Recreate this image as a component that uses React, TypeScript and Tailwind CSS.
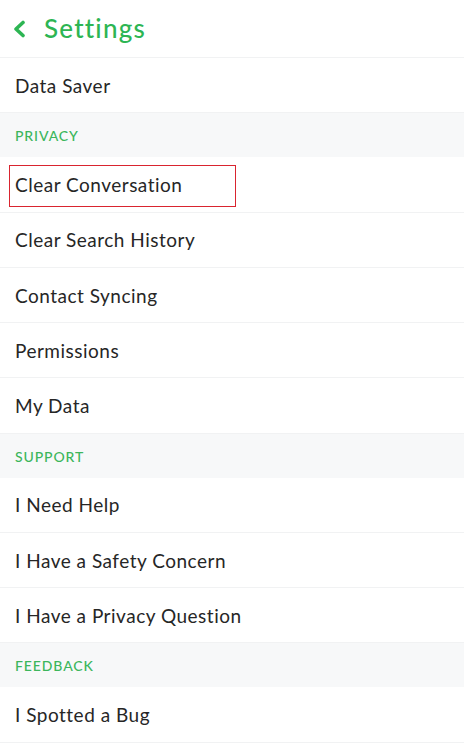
import React from 'react';

interface Row {
  title: string;
  section?: boolean;
  highlight?: boolean;
}

const rows: Row[] = [
  { title: 'Data Saver' },
  { title: 'PRIVACY', section: true },
  { title: 'Clear Conversation', highlight: true },
  { title: 'Clear Search History' },
  { title: 'Contact Syncing' },
  { title: 'Permissions' },
  { title: 'My Data' },
  { title: 'SUPPORT', section: true },
  { title: 'I Need Help' },
  { title: 'I Have a Safety Concern' },
  { title: 'I Have a Privacy Question' },
  { title: 'FEEDBACK', section: true },
  { title: 'I Spotted a Bug' },
];

export default function App() {
  return (
    <div
      className="w-[464px] h-[749px] overflow-hidden bg-white"
      style={{ fontFamily: 'Lato, "Open Sans", sans-serif' }}
    >
      {/* Header */}
      <div className="flex h-[58px] items-center border-b border-[#f1f2f3] pl-[12px]">
        <svg width="14" height="18" viewBox="0 0 14 18" className="mr-[18px]">
          <path
            d="M11 2.5 L4 9 L11 15.5"
            fill="none"
            stroke="#2db553"
            strokeWidth="3.6"
            strokeLinecap="round"
            strokeLinejoin="round"
          />
        </svg>
        <h1 className="text-[26px] font-medium tracking-[1.2px] text-[#2db553]">Settings</h1>
      </div>

      {rows.map(row =>
        row.section ? (
          <div
            key={row.title}
            className="flex h-[44px] items-center bg-[#f7f8f9] px-[15px] pt-[1px] text-[14px] font-medium tracking-[0.9px] text-[#3cb65c]"
          >
            {row.title}
          </div>
        ) : (
          <div
            key={row.title}
            className="relative flex h-[55.25px] items-center border-b border-[#f1f2f3] px-[15px] pt-[2px] text-[19px] tracking-[0.5px] text-[#262626]"
          >
            {row.title}
            {row.highlight && (
              <div className="absolute left-[9px] top-[8px] h-[42px] w-[227px] border-[1.5px] border-[#d9242f]" />
            )}
          </div>
        )
      )}
    </div>
  );
}
